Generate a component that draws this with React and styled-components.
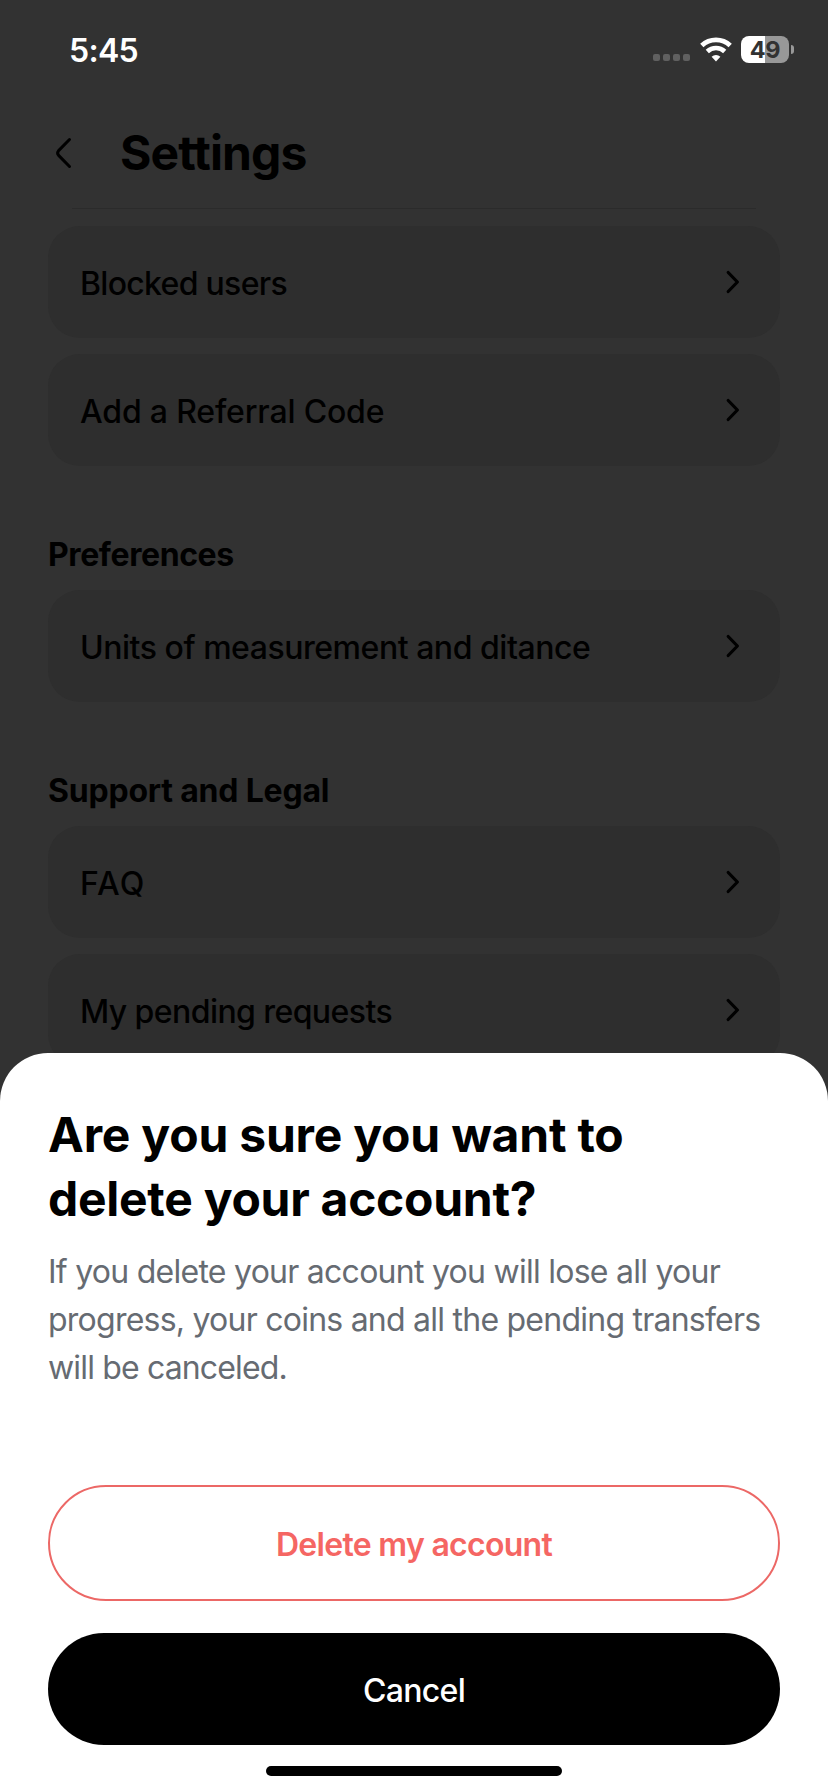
import React from "react";
import styled, { createGlobalStyle } from "styled-components";

const GlobalStyle = createGlobalStyle`
  * {
    box-sizing: border-box;
  }

  body {
    margin: 0;
    background: #323232;
    font-family: Inter, "Liberation Sans", sans-serif;
    color: #000;
  }
`;

const Screen = styled.div`
  position: relative;
  width: 828px;
  height: 1792px;
  overflow: hidden;
  background: #323232;
`;

const StatusBar = styled.div`
  display: flex;
  align-items: center;
  height: 99px;
  padding: 0 34px 0 69px;
`;

const Time = styled.div`
  flex: 1;
  padding-top: 2px;
  font-size: 32px;
  font-weight: 600;
  line-height: 40px;
  letter-spacing: -0.7px;
  color: #fff;
`;

const SignalDots = styled.div`
  display: flex;
  gap: 3px;
  margin: 15px 10px 0 0;
`;

const Dot = styled.span`
  width: 7px;
  height: 7px;
  border-radius: 2px;
  background: #606060;
`;

const Battery = styled.div`
  width: 48px;
  height: 27px;
  margin-left: 9px;
  border-radius: 8px;
  background: linear-gradient(to right, #fff 50%, #989898 50%);
  font-size: 23.5px;
  font-weight: 700;
  line-height: 27px;
  letter-spacing: -0.3px;
  text-align: center;
  color: #323232;
`;

const BatteryCap = styled.span`
  width: 3px;
  height: 9px;
  margin-left: 2px;
  border-radius: 0 4px 4px 0;
  background: #989898;
`;

const Header = styled.div`
  display: flex;
  align-items: center;
  height: 109px;
  padding: 0 54px 2px;
`;

const Title = styled.h1`
  margin: 0 0 0 46px;
  font-size: 48px;
  font-weight: 700;
  line-height: 60px;
  letter-spacing: -0.9px;
`;

const Divider = styled.div`
  height: 1px;
  margin: 0 72px;
  background: #2b2b2b;
`;

const List = styled.div`
  display: flex;
  flex-direction: column;
  gap: 16px;
  padding: 17px 48px 0;
`;

const SectionTitle = styled.h2`
  margin: 51px 0 -3px;
  font-size: 32px;
  font-weight: 700;
  line-height: 44px;
  letter-spacing: ${({ $track }) => $track || 0}px;
`;

const Row = styled.div`
  display: flex;
  align-items: center;
  justify-content: space-between;
  height: 112px;
  padding: 0 40px 0 32px;
  border-radius: 32px;
  background: #2e2e2e;
`;

const RowLabel = styled.span`
  padding-top: 4px;
  font-size: 32px;
  font-weight: 500;
  line-height: 40px;
  letter-spacing: ${({ $track }) => $track || 0}px;
`;

const Sheet = styled.div`
  position: absolute;
  right: 0;
  bottom: 0;
  left: 0;
  display: flex;
  flex-direction: column;
  height: 739px;
  padding: 50px 48px 0;
  border-radius: 48px 48px 0 0;
  background: #fff;
`;

const SheetTitle = styled.h2`
  margin: 0;
  font-size: 48px;
  font-weight: 700;
  line-height: 64px;
  white-space: nowrap;
`;

const SheetText = styled.p`
  margin: 17px 0 93px;
  font-size: 32px;
  font-weight: 400;
  line-height: 48px;
  white-space: nowrap;
  color: #666b72;
`;

const Line = styled.span`
  display: block;
  letter-spacing: ${({ $track }) => $track || 0}px;
`;

const Button = styled.button`
  flex: none;
  height: ${({ $outline }) => ($outline ? 116 : 112)}px;
  margin: 0 0 32px;
  padding: 3px 0 0;
  border: ${({ $outline }) => ($outline ? "2px solid #ec6866" : "none")};
  border-radius: 58px;
  background: ${({ $outline }) => ($outline ? "#fff" : "#000")};
  font-family: inherit;
  font-size: 32px;
  font-weight: ${({ $outline }) => ($outline ? 600 : 500)};
  letter-spacing: -0.7px;
  color: ${({ $outline }) => ($outline ? "#f56663" : "#fff")};
`;

const HomeIndicator = styled.div`
  flex: none;
  width: 296px;
  height: 10px;
  margin: -11px auto 0;
  border-radius: 5px;
  background: #000;
`;

const WifiIcon = () => (
  <svg width="32" height="25" viewBox="0 0 32 25" fill="none">
    <path d="M1.8 8.6a20.6 20.6 0 0 1 28.4 0" stroke="#fff" strokeWidth="4.8" />
    <path d="M7.3 14.5a12.6 12.6 0 0 1 17.4 0" stroke="#fff" strokeWidth="4.6" />
    <path d="M16 24.6l-4.4-4.8a6.2 6.2 0 0 1 8.8 0z" fill="#fff" />
  </svg>
);

const BackIcon = () => (
  <svg width="20" height="34" viewBox="0 0 20 34" fill="none">
    <path
      d="M15.5 3.5L4.6 14.6q-2 2.4 0 4.8L15.5 30.5"
      stroke="#000"
      strokeWidth="3"
      strokeLinecap="round"
      strokeLinejoin="round"
    />
  </svg>
);

const ChevronIcon = () => (
  <svg width="16" height="26" viewBox="0 0 16 26" fill="none">
    <path
      d="M4.2 3.5L13.4 13L4.2 22.5"
      stroke="#000"
      strokeWidth="3.2"
      strokeLinecap="round"
      strokeLinejoin="round"
    />
  </svg>
);

const sections = [
  {
    items: [
      { label: "Blocked users", track: -0.7 },
      { label: "Add a Referral Code", track: -0.17 },
    ],
  },
  {
    title: "Preferences",
    track: -0.4,
    items: [{ label: "Units of measurement and ditance", track: -0.47 }],
  },
  {
    title: "Support and Legal",
    track: -0.2,
    items: [
      { label: "FAQ", track: 1.1 },
      { label: "My pending requests", track: -0.58 },
    ],
  },
];

const App = () => {
  return (
    <Screen>
      <GlobalStyle />
      <StatusBar>
        <Time>5:45</Time>
        <SignalDots>
          <Dot />
          <Dot />
          <Dot />
          <Dot />
        </SignalDots>
        <WifiIcon />
        <Battery>49</Battery>
        <BatteryCap />
      </StatusBar>
      <Header>
        <BackIcon />
        <Title>Settings</Title>
      </Header>
      <Divider />
      <List>
        {sections.map((section, index) => (
          <React.Fragment key={index}>
            {section.title && (
              <SectionTitle $track={section.track}>{section.title}</SectionTitle>
            )}
            {section.items.map((item) => (
              <Row key={item.label}>
                <RowLabel $track={item.track}>{item.label}</RowLabel>
                <ChevronIcon />
              </Row>
            ))}
          </React.Fragment>
        ))}
      </List>
      <Sheet>
        <SheetTitle>
          <Line $track={-0.21}>Are you sure you want to</Line>
          <Line $track={-0.27}>delete your account?</Line>
        </SheetTitle>
        <SheetText>
          <Line $track={-0.74}>If you delete your account you will lose all your</Line>
          <Line $track={-0.76}>progress, your coins and all the pending transfers</Line>
          <Line $track={-0.85}>will be canceled.</Line>
        </SheetText>
        <Button $outline>Delete my account</Button>
        <Button>Cancel</Button>
        <HomeIndicator />
      </Sheet>
    </Screen>
  );
};

export default App;
